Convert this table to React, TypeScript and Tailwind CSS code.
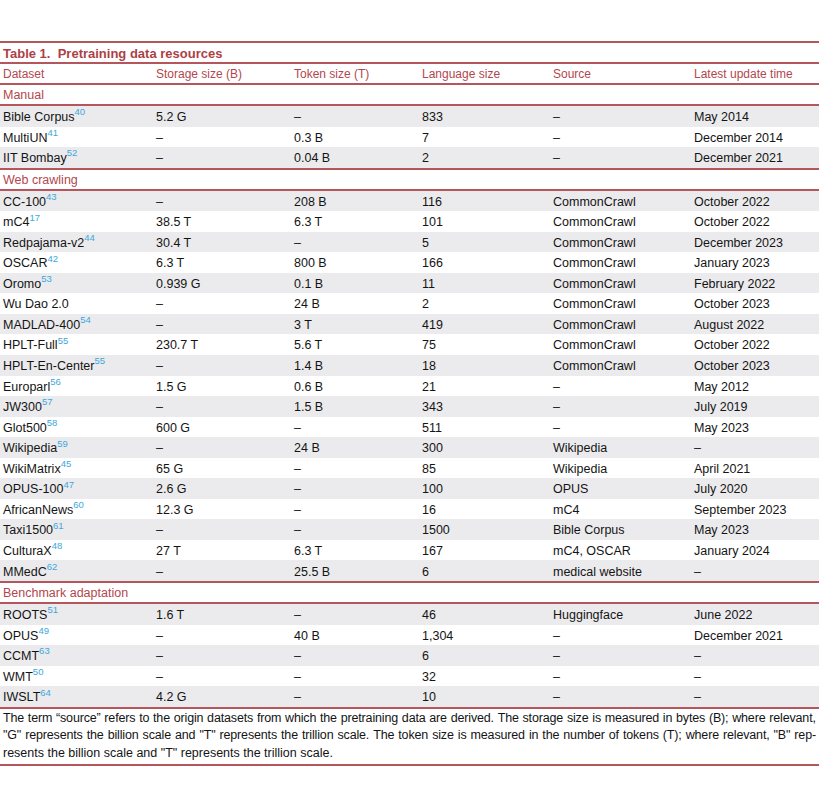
type Row = [string, string | null, string, string, string, string, string];

const groups: { name: string; rows: Row[] }[] = [
  {
    name: 'Manual',
    rows: [
      ['Bible Corpus', '40', '5.2 G', '–', '833', '–', 'May 2014'],
      ['MultiUN', '41', '–', '0.3 B', '7', '–', 'December 2014'],
      ['IIT Bombay', '52', '–', '0.04 B', '2', '–', 'December 2021'],
    ],
  },
  {
    name: 'Web crawling',
    rows: [
      ['CC-100', '43', '–', '208 B', '116', 'CommonCrawl', 'October 2022'],
      ['mC4', '17', '38.5 T', '6.3 T', '101', 'CommonCrawl', 'October 2022'],
      ['Redpajama-v2', '44', '30.4 T', '–', '5', 'CommonCrawl', 'December 2023'],
      ['OSCAR', '42', '6.3 T', '800 B', '166', 'CommonCrawl', 'January 2023'],
      ['Oromo', '53', '0.939 G', '0.1 B', '11', 'CommonCrawl', 'February 2022'],
      ['Wu Dao 2.0', null, '–', '24 B', '2', 'CommonCrawl', 'October 2023'],
      ['MADLAD-400', '54', '–', '3 T', '419', 'CommonCrawl', 'August 2022'],
      ['HPLT-Full', '55', '230.7 T', '5.6 T', '75', 'CommonCrawl', 'October 2022'],
      ['HPLT-En-Center', '55', '–', '1.4 B', '18', 'CommonCrawl', 'October 2023'],
      ['Europarl', '56', '1.5 G', '0.6 B', '21', '–', 'May 2012'],
      ['JW300', '57', '–', '1.5 B', '343', '–', 'July 2019'],
      ['Glot500', '58', '600 G', '–', '511', '–', 'May 2023'],
      ['Wikipedia', '59', '–', '24 B', '300', 'Wikipedia', '–'],
      ['WikiMatrix', '45', '65 G', '–', '85', 'Wikipedia', 'April 2021'],
      ['OPUS-100', '47', '2.6 G', '–', '100', 'OPUS', 'July 2020'],
      ['AfricanNews', '60', '12.3 G', '–', '16', 'mC4', 'September 2023'],
      ['Taxi1500', '61', '–', '–', '1500', 'Bible Corpus', 'May 2023'],
      ['CulturaX', '48', '27 T', '6.3 T', '167', 'mC4, OSCAR', 'January 2024'],
      ['MMedC', '62', '–', '25.5 B', '6', 'medical website', '–'],
    ],
  },
  {
    name: 'Benchmark adaptation',
    rows: [
      ['ROOTS', '51', '1.6 T', '–', '46', 'Huggingface', 'June 2022'],
      ['OPUS', '49', '–', '40 B', '1,304', '–', 'December 2021'],
      ['CCMT', '63', '–', '–', '6', '–', '–'],
      ['WMT', '50', '–', '–', '32', '–', '–'],
      ['IWSLT', '64', '4.2 G', '–', '10', '–', '–'],
    ],
  },
];

const headers = ['Dataset', 'Storage size (B)', 'Token size (T)', 'Language size', 'Source', 'Latest update time'];

const cols = 'grid grid-cols-[153px_138px_128px_131px_141px_1fr]';

const Rule = () => <div className="h-[2px] bg-[#b5565c]" />;

// justified line: words spread across full width
const JustLine = ({ text }: { text: string }) => (
  <div className="flex justify-between whitespace-nowrap tracking-[-0.15px]">
    {text.split(' ').map((w, i) => (
      <span key={i}>{w}</span>
    ))}
  </div>
);

const DataRow = ({ row, odd }: { row: Row; odd: boolean }) => {
  const [name, ref, ...rest] = row;
  return (
    <div className={`${cols} h-[20.56px] pt-[2px] items-center ${odd ? 'bg-[#ebebed]' : 'bg-white'}`}>
      <div className="pl-[3px] whitespace-nowrap">
        {name}
        {ref && <sup className="text-[9.5px] text-[#3ea7dc] top-[-0.6em]">{ref}</sup>}
      </div>
      {rest.map((v, i) => (
        <div key={i} className="pl-[3px] whitespace-nowrap">{v}</div>
      ))}
    </div>
  );
};

export default function App() {
  return (
    <div className="w-[820px] bg-white pt-[41px] font-['Liberation_Sans',Arial,sans-serif] text-[12.5px] text-[#141414] leading-none">
      <div className="w-[819px]">
        <Rule />
        <div className="h-[19px] pt-[2px] flex items-center pl-[3px] font-bold text-[13px] text-[#ad3f46]">
          Table 1.&nbsp; Pretraining data resources
        </div>
        <Rule />
        <div className={`${cols} h-[19px] items-center text-[12px] text-[#b2474e]`}>
          {headers.map(h => (
            <div key={h} className="pl-[3px] whitespace-nowrap">{h}</div>
          ))}
        </div>
        <Rule />
        {groups.map(g => (
          <div key={g.name}>
            <div className="h-[19px] pt-[2px] flex items-center pl-[3px] text-[#b2474e]">{g.name}</div>
            <Rule />
            {g.rows.map((r, i) => (
              <DataRow key={r[0]} row={r} odd={i % 2 === 0} />
            ))}
            <Rule />
          </div>
        ))}
        <div className="px-[3px] pt-[1px] pb-[2px] text-[12.5px] leading-[17.5px] text-[#141414]">
          <JustLine text="The term “source” refers to the origin datasets from which the pretraining data are derived. The storage size is measured in bytes (B); where relevant," />
          <JustLine text={'"G" represents the billion scale and "T" represents the trillion scale. The token size is measured in the number of tokens (T); where relevant, "B" rep-'} />
          <div>resents the billion scale and "T" represents the trillion scale.</div>
        </div>
        <Rule />
      </div>
    </div>
  );
}
